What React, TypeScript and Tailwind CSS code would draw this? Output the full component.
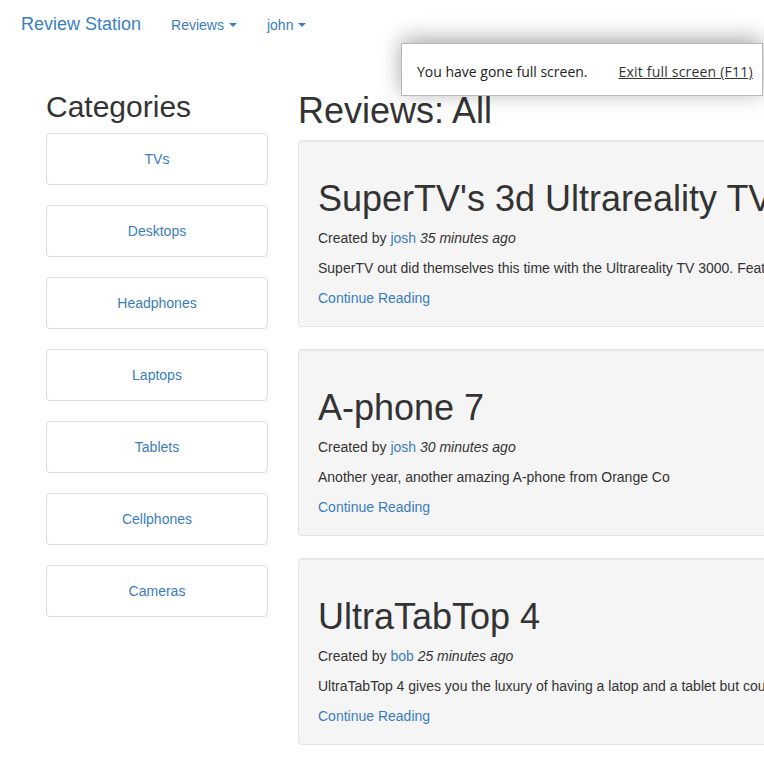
const categories = ["TVs", "Desktops", "Headphones", "Laptops", "Tablets", "Cellphones", "Cameras"];

const reviews = [
  {
    title: "SuperTV's 3d Ultrareality TV 3000",
    author: "josh",
    time: "35 minutes ago",
    body: "SuperTV out did themselves this time with the Ultrareality TV 3000. Features include a massive screen and true 3d.",
  },
  {
    title: "A-phone 7",
    author: "josh",
    time: "30 minutes ago",
    body: "Another year, another amazing A-phone from Orange Co",
  },
  {
    title: "UltraTabTop 4",
    author: "bob",
    time: "25 minutes ago",
    body: "UltraTabTop 4 gives you the luxury of having a latop and a tablet but could it be better?",
  },
];

const Caret: React.FC = () => (
  <span className="inline-block ml-[5px] align-middle w-0 h-0 border-x-4 border-x-transparent border-t-4 border-t-[#3a7dbd] relative -top-px" />
);

const Navbar: React.FC = () => {
  return (
    <nav className="h-[50px] flex items-start pt-[14px] pl-[21px] bg-white">
      <a className="text-[18px] leading-[20px] text-[#3b7fc0]">Review Station</a>
      <ul className="flex ml-[30px] text-[14px] leading-[20px] text-[#3a7dbd]">
        <li className="mr-[30px] pt-px">
          Reviews
          <Caret />
        </li>
        <li className="pt-px">
          john
          <Caret />
        </li>
      </ul>
    </nav>
  );
};

const ReviewCard: React.FC<{ r: (typeof reviews)[number] }> = ({ r }) => (
  <div className="bg-[#f5f5f5] border border-[#e3e3e3] rounded-[4px] pt-[38px] pb-[18px] px-[19px] shadow-[inset_0_1px_1px_rgba(0,0,0,0.05)]">
    <h1 className="text-[36px] leading-[40px] whitespace-nowrap text-[#333]">{r.title}</h1>
    <p className="mt-[9px] text-[14px] leading-[20px] whitespace-nowrap">
      Created by <a className="text-[#3a7dbd]">{r.author}</a> <em>{r.time}</em>
    </p>
    <p className="mt-[10px] text-[14px] leading-[20px] whitespace-nowrap">{r.body}</p>
    <a className="block mt-[10px] text-[14px] leading-[20px] text-[#3a7dbd]">Continue Reading</a>
  </div>
);

export default function App() {
  return (
    <div
      className="relative w-full h-[763px] overflow-hidden bg-white text-[#333]"
      style={{ fontFamily: '"Liberation Sans", Arial, sans-serif' }}
    >
      <Navbar />
      <div className="flex pl-[46px] pt-[38px]">
        <aside className="w-[222px] shrink-0">
          <h2 className="mt-[2px] text-[30px] leading-[33px]">Categories</h2>
          <ul className="mt-[10px] flex flex-col gap-[20px]">
            {categories.map((c) => (
              <li
                key={c}
                className="h-[52px] flex items-center justify-center border border-[#ddd] rounded-[4px] bg-white text-[14px] text-[#3a7dbd]"
              >
                {c}
              </li>
            ))}
          </ul>
        </aside>
        <main className="ml-[30px] w-[620px] shrink-0">
          <h1 className="mt-[3px] text-[36px] leading-[40px]">Reviews: All</h1>
          <div className="mt-[9px] flex flex-col gap-[22px]">
            {reviews.map((r) => (
              <ReviewCard key={r.title} r={r} />
            ))}
          </div>
        </main>
      </div>

      {/* browser full screen notice */}
      <div
        className="absolute left-[401px] top-[43px] w-[362px] h-[53px] bg-white border border-[#b8b8b8] shadow-[0_-4px_22px_rgba(0,0,0,0.35)] flex items-center pl-[15px] pt-[3px] text-[14px] text-[#222]"
        style={{ fontFamily: '"Open Sans", "Noto Sans", sans-serif' }}
      >
        <span>You have gone full screen.</span>
        <span className="ml-[31px] underline text-[#333] tracking-[0.2px]">Exit full screen (F11)</span>
      </div>
    </div>
  );
}
